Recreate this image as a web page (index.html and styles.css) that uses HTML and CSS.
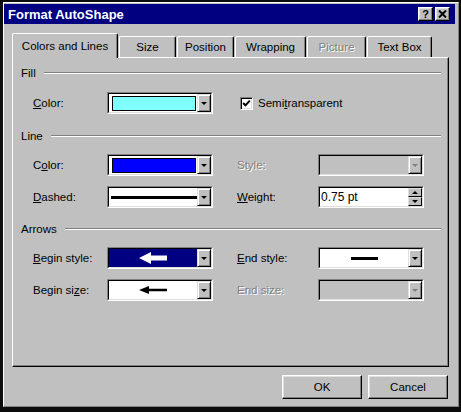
FILE: index.html
```html
<!DOCTYPE html>
<html>
<head>
<meta charset="utf-8">
<link rel="stylesheet" href="styles.css">
</head>
<body>
<div class="screen">
  <div class="dialog">
    <div class="titlebar">
      <span class="title">Format AutoShape</span>
      <div class="caption-btns">
        <span class="cbtn help">?</span>
        <span class="cbtn close"><svg width="9" height="8" viewBox="0 0 9 8"><path d="M1 0.5 L8 7.5 M8 0.5 L1 7.5" stroke="#000" stroke-width="2" fill="none"/></svg></span>
      </div>
    </div>
    <div class="body">
      <div class="tabs">
        <div class="tab active t-colors">Colors and Lines</div>
        <div class="tab t-size">Size</div>
        <div class="tab t-position">Position</div>
        <div class="tab t-wrapping">Wrapping</div>
        <div class="tab t-picture disabled">Picture</div>
        <div class="tab t-textbox">Text Box</div>
      </div>
      <div class="panel">
        <div class="sec sec-fill"><span>Fill</span><span class="rule"></span></div>
        <div class="row row-fill">
          <span class="lbl"><u>C</u>olor:</span>
          <div class="combo"><div class="combo-in">
            <div class="field"><span class="swatch cyan"></span></div>
            <span class="ddbtn"><span class="tri"></span></span>
          </div></div>
          <span class="check"><svg width="9" height="9" viewBox="0 0 9 9"><path d="M1.2 4 L3.5 6.4 L7.8 1.6" stroke="#000" stroke-width="2" fill="none"/></svg></span>
          <span class="check-lbl">Semi<u>t</u>ransparent</span>
        </div>

        <div class="sec sec-line"><span>Line</span><span class="rule"></span></div>
        <div class="row row-color">
          <span class="lbl">C<u>o</u>lor:</span>
          <div class="combo"><div class="combo-in">
            <div class="field"><span class="swatch blue"></span></div>
            <span class="ddbtn"><span class="tri"></span></span>
          </div></div>
          <span class="rlbl disabled">Style:</span>
          <div class="combo"><div class="combo-in off">
            <div class="field"></div>
            <span class="ddbtn"><span class="tri grey"></span></span>
          </div></div>
        </div>
        <div class="row row-dashed">
          <span class="lbl"><u>D</u>ashed:</span>
          <div class="combo"><div class="combo-in">
            <div class="field center"><span class="hline wide"></span></div>
            <span class="ddbtn"><span class="tri"></span></span>
          </div></div>
          <span class="rlbl"><u>W</u>eight:</span>
          <div class="combo"><div class="combo-in">
            <div class="field text">0.75 pt</div>
            <span class="spin">
              <span class="spinbtn"><span class="tri up"></span></span>
              <span class="spinbtn"><span class="tri"></span></span>
            </span>
          </div></div>
        </div>

        <div class="sec sec-arrows"><span>Arrows</span><span class="rule"></span></div>
        <div class="row row-bstyle">
          <span class="lbl"><u>B</u>egin style:</span>
          <div class="combo"><div class="combo-in">
            <div class="field center navy">
              <svg width="28" height="12" viewBox="0 0 28 12"><polygon points="0,6 12,0 12,3.5 28,3.5 28,8.5 12,8.5 12,12" fill="#fff"/></svg>
            </div>
            <span class="ddbtn"><span class="tri"></span></span>
          </div></div>
          <span class="rlbl"><u>E</u>nd style:</span>
          <div class="combo"><div class="combo-in">
            <div class="field center"><span class="hline short"></span></div>
            <span class="ddbtn"><span class="tri"></span></span>
          </div></div>
        </div>
        <div class="row row-bsize">
          <span class="lbl">Begin si<u>z</u>e:</span>
          <div class="combo"><div class="combo-in">
            <div class="field center">
              <svg width="28" height="8" viewBox="0 0 28 8"><polygon points="0,4 10,0 10,2.8 28,2.8 28,5.2 10,5.2 10,8" fill="#000"/></svg>
            </div>
            <span class="ddbtn"><span class="tri"></span></span>
          </div></div>
          <span class="rlbl disabled">End size:</span>
          <div class="combo"><div class="combo-in off">
            <div class="field"></div>
            <span class="ddbtn"><span class="tri grey"></span></span>
          </div></div>
        </div>
      </div>
      <div class="actions">
        <button class="btn">OK</button>
        <button class="btn">Cancel</button>
      </div>
    </div>
  </div>
</div>
</body>
</html>
```
FILE: styles.css
```css
html, body {
  margin: 0;
  padding: 0;
  background: #000;
}

.screen {
  width: 461px;
  height: 412px;
  box-sizing: border-box;
  padding: 2px 2px 5px 3px;
  background: #0c0c0c;
  font-family: "Liberation Sans", Arial, sans-serif;
  font-size: 11.5px;
  color: #000;
}

.dialog {
  height: 100%;
  box-sizing: border-box;
  background: #c0c0c0;
  border-top: 1px solid #fff;
  border-left: 1px solid #fff;
  border-right: 1px solid #808080;
  border-bottom: 1px solid #808080;
  padding: 1px 3px 0 0;
}

.titlebar {
  height: 20px;
  background: #000080;
  display: flex;
  align-items: center;
  justify-content: space-between;
  padding: 0 5px 0 4px;
}

.title {
  color: #fff;
  font-weight: bold;
  font-size: 13px;
}

.caption-btns {
  display: flex;
  gap: 2px;
}

.cbtn {
  width: 15px;
  height: 14px;
  box-sizing: border-box;
  background: #c0c0c0;
  border: 1px solid;
  border-color: #fff #000 #000 #fff;
  box-shadow: inset -1px -1px #808080, inset 1px 1px #dfdfdf;
  display: flex;
  align-items: center;
  justify-content: center;
  font-weight: bold;
  font-size: 11px;
  line-height: 1;
}

.body {
  padding: 9px 0 0 8px;
}

.tabs {
  display: flex;
  align-items: flex-end;
  height: 24px;
}

.tab {
  height: 21px;
  box-sizing: border-box;
  border-top: 1px solid #fff;
  border-left: 1px solid #fff;
  border-right: 1px solid #000;
  border-radius: 2px 2px 0 0;
  box-shadow: inset -1px 0 #808080;
  background: #c0c0c0;
  display: flex;
  align-items: center;
  justify-content: center;
  margin-left: 1px;
  white-space: nowrap;
}

.tab.active {
  height: 25px;
  margin-bottom: -1px;
  margin-left: 0;
  position: relative;
  z-index: 1;
}

.t-colors { width: 106px; }
.t-size { width: 57px; margin-left: 1px; }
.t-position { width: 57px; }
.t-wrapping { width: 71px; }
.t-picture { width: 59px; }
.t-textbox { width: 65px; }

.disabled {
  color: #808080;
  text-shadow: 1px 1px 0 #fff;
}

.panel {
  width: 437px;
  height: 310px;
  box-sizing: border-box;
  border-top: 1px solid #fff;
  border-left: 1px solid #fff;
  border-right: 1px solid #000;
  border-bottom: 1px solid #000;
  box-shadow: inset -1px -1px #808080;
  padding: 8px 7px 0 8px;
}

.sec {
  height: 14px;
  display: flex;
  align-items: center;
}

.rule {
  flex: 1;
  margin-left: 8px;
  height: 0;
  border-top: 1px solid #808080;
  border-bottom: 1px solid #fff;
}

.row {
  height: 22px;
  display: flex;
  align-items: center;
  padding-left: 12px;
}

.row-fill { margin-top: 12px; }
.sec-line { margin-top: 15px; }
.row-color { margin-top: 11px; }
.row-dashed { margin-top: 10px; }
.sec-arrows { margin-top: 14px; }
.row-bstyle { margin-top: 11px; }
.row-bsize { margin-top: 10px; }

.lbl {
  width: 74px;
  white-space: nowrap;
}

.rlbl {
  width: 81px;
  margin-left: 24px;
  white-space: nowrap;
}

.combo {
  width: 106px;
  height: 22px;
  box-sizing: border-box;
  border: 1px solid;
  border-color: #808080 #fff #fff #808080;
}

.combo-in {
  height: 100%;
  box-sizing: border-box;
  border: 1px solid;
  border-color: #000 #dfdfdf #dfdfdf #000;
  background: #fff;
  display: flex;
}

.combo-in.off {
  background: #c0c0c0;
}

.field {
  flex: 1;
  box-sizing: border-box;
  padding: 2px 1px 1px 3px;
  display: flex;
}

.field.center {
  padding: 0;
  align-items: center;
  justify-content: center;
}

.field.navy {
  background: #000080;
}

.field.text {
  padding: 0 0 0 1px;
  align-items: center;
  font-size: 12px;
}

.swatch {
  flex: 1;
  box-sizing: border-box;
  border: 1px solid #000;
}

.swatch.cyan { background: #80ffff; }
.swatch.blue { background: #0000ff; }

.hline {
  display: block;
  height: 3px;
  background: #000;
}

.hline.wide {
  width: 86px;
  margin-left: 1px;
}

.hline.short {
  width: 27px;
}

.ddbtn {
  width: 14px;
  box-sizing: border-box;
  background: #c0c0c0;
  border: 1px solid;
  border-color: #dfdfdf #000 #000 #dfdfdf;
  box-shadow: inset 1px 1px #fff, inset -1px -1px #808080;
  display: flex;
  align-items: center;
  justify-content: center;
}

.tri {
  width: 0;
  height: 0;
  border-left: 3px solid transparent;
  border-right: 3px solid transparent;
  border-top: 3px solid #000;
}

.tri.up {
  border-top: 0;
  border-bottom: 3px solid #000;
}

.tri.grey {
  border-top-color: #808080;
}

.spin {
  width: 14px;
  display: flex;
  flex-direction: column;
}

.spinbtn {
  flex: 1;
  box-sizing: border-box;
  background: #c0c0c0;
  border: 1px solid;
  border-color: #dfdfdf #000 #000 #dfdfdf;
  display: flex;
  align-items: center;
  justify-content: center;
}

.check {
  width: 13px;
  height: 13px;
  box-sizing: border-box;
  margin-left: 27px;
  border: 1px solid;
  border-color: #808080 #fff #fff #808080;
  box-shadow: inset 1px 1px #000, inset -1px -1px #dfdfdf;
  background: #fff;
  display: flex;
  align-items: center;
  justify-content: center;
}

.check-lbl {
  margin-left: 5px;
}

.actions {
  width: 437px;
  box-sizing: border-box;
  margin-top: 8px;
  padding-right: 1px;
  display: flex;
  justify-content: flex-end;
  gap: 6px;
}

.btn {
  width: 80px;
  height: 24px;
  box-sizing: border-box;
  background: #c0c0c0;
  border: 1px solid;
  border-color: #fff #000 #000 #fff;
  box-shadow: inset -1px -1px #808080, inset 1px 1px #dfdfdf;
  font-family: "Liberation Sans", Arial, sans-serif;
  font-size: 11.5px;
  color: #000;
  padding: 0;
}
```
